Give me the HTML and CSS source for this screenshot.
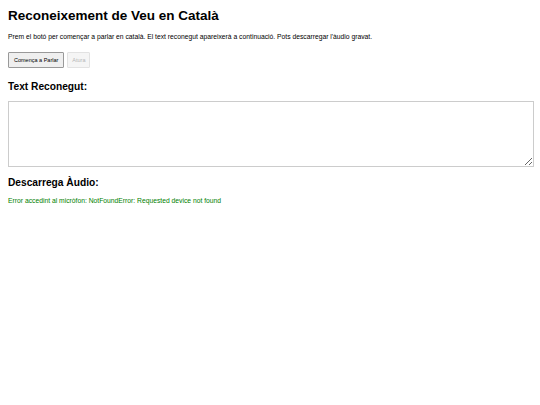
FILE: index.html
```html
<!DOCTYPE html>
<html lang="ca">
<head>
    <meta charset="UTF-8">
    <meta name="viewport" content="width=device-width, initial-scale=1.0">
    <title>Reconeixement de Veu en Català</title>
    <link rel="stylesheet" href="styles.css">
</head>
<body>
    <h1>Reconeixement de Veu en Català</h1>
    <p class="intro">Prem el botó per començar a parlar en català. El text reconegut apareixerà a continuació. Pots descarregar l'àudio gravat.</p>

    <div class="controls">
        <button id="start" class="btn">Comença a Parlar</button>
        <button id="stop" class="btn" disabled>Atura</button>
    </div>

    <h2>Text Reconegut:</h2>
    <textarea id="result" class="result"></textarea>

    <h2 class="download">Descarrega Àudio:</h2>
    <div id="status" class="status">Error accedint al micròfon: NotFoundError: Requested device not found</div>
</body>
</html>
```

FILE: styles.css
```css
body {
    font-family: 'Liberation Sans', Arial, sans-serif;
    margin: 0;
    padding: 8px;
    color: #000;
    background: #fff;
}
h1 {
    font-size: 13.5px;
    margin: 1px 0 10px;
    line-height: 14px;
}
.intro {
    font-size: 6.75px;
    margin: 0 0 11px;
    line-height: 8px;
}
.controls {
    display: flex;
    gap: 3px;
}
.btn {
    font-family: inherit;
    font-size: 5.5px;
    height: 16px;
    padding: 0 5px;
    background: #efefef;
    border: 1px solid #999;
    border-radius: 1px;
    color: #000;
}
.btn:disabled {
    padding: 0 4px;
    border-color: #e2e2e2;
    background: #f5f5f5;
    color: #b5b5b5;
}
h2 {
    font-size: 10.2px;
    margin: 13px 0 8px;
    line-height: 12px;
}
.result {
    display: block;
    width: 526px;
    height: 66px;
    box-sizing: border-box;
    border: 1px solid #ccc;
    margin: 0;
}
.download {
    margin-top: 10px;
}
.status {
    font-size: 6.75px;
    line-height: 8px;
    color: green;
}
```
